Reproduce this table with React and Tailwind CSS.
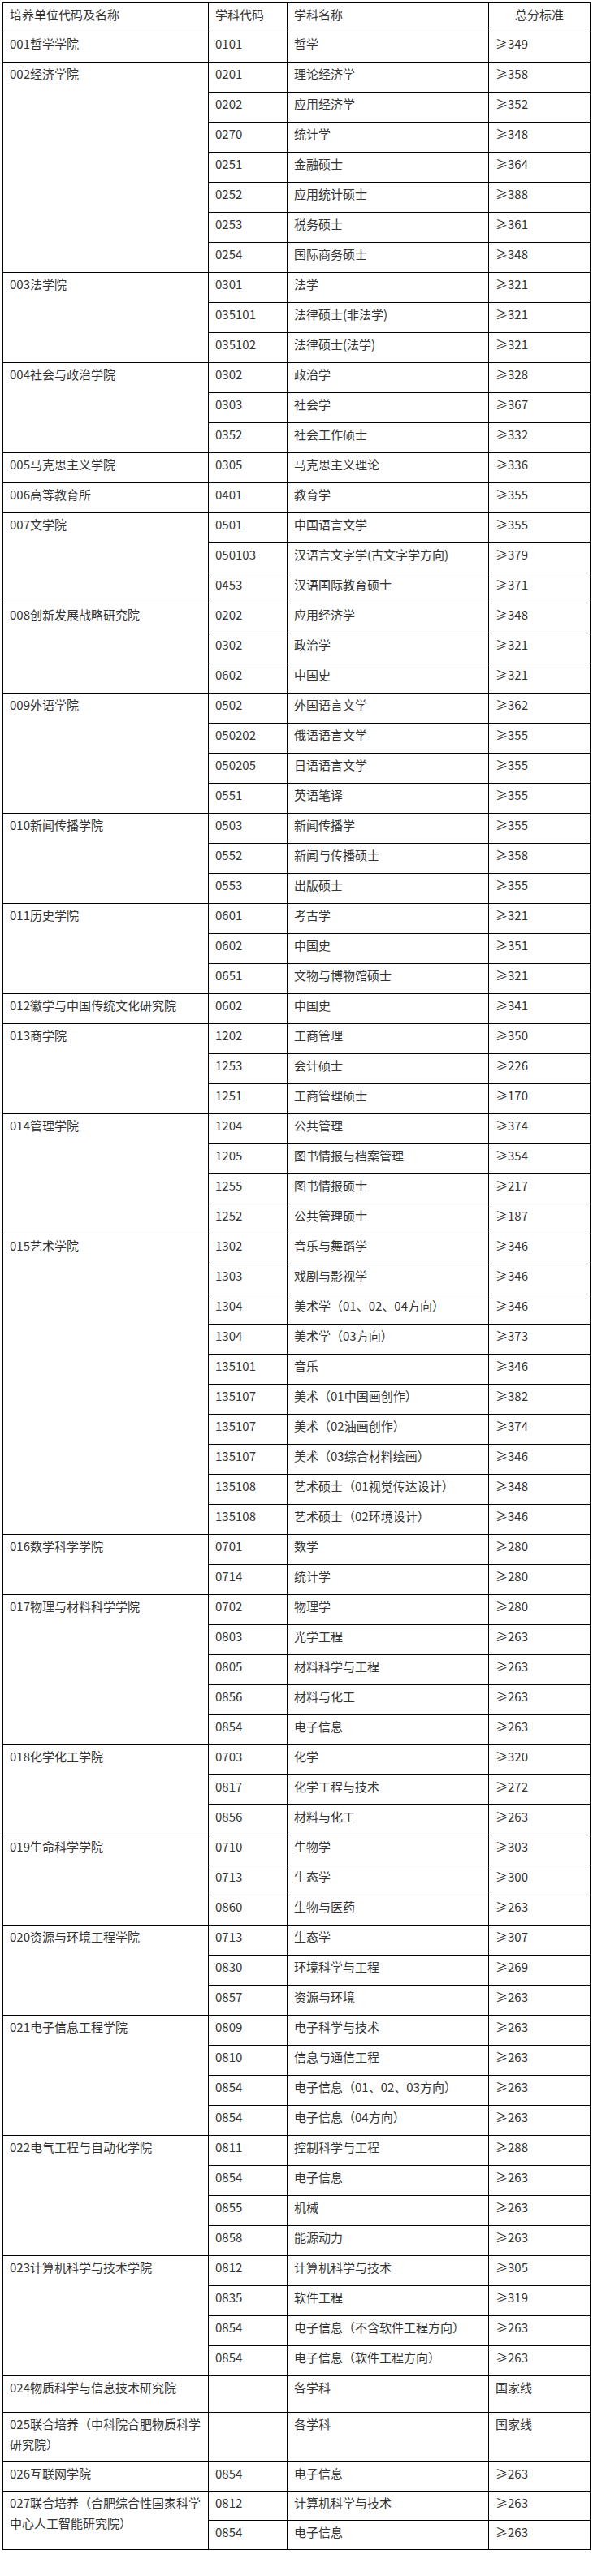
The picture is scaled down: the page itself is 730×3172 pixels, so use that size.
import React from "react";

const groups = [
  ["001哲学学院", [["0101", "哲学", "≥349"]]],
  [
    "002经济学院",
    [
      ["0201", "理论经济学", "≥358"],
      ["0202", "应用经济学", "≥352"],
      ["0270", "统计学", "≥348"],
      ["0251", "金融硕士", "≥364"],
      ["0252", "应用统计硕士", "≥388"],
      ["0253", "税务硕士", "≥361"],
      ["0254", "国际商务硕士", "≥348"],
    ],
  ],
  [
    "003法学院",
    [
      ["0301", "法学", "≥321"],
      ["035101", "法律硕士(非法学)", "≥321"],
      ["035102", "法律硕士(法学)", "≥321"],
    ],
  ],
  [
    "004社会与政治学院",
    [
      ["0302", "政治学", "≥328"],
      ["0303", "社会学", "≥367"],
      ["0352", "社会工作硕士", "≥332"],
    ],
  ],
  ["005马克思主义学院", [["0305", "马克思主义理论", "≥336"]]],
  ["006高等教育所", [["0401", "教育学", "≥355"]]],
  [
    "007文学院",
    [
      ["0501", "中国语言文学", "≥355"],
      ["050103", "汉语言文字学(古文字学方向)", "≥379"],
      ["0453", "汉语国际教育硕士", "≥371"],
    ],
  ],
  [
    "008创新发展战略研究院",
    [
      ["0202", "应用经济学", "≥348"],
      ["0302", "政治学", "≥321"],
      ["0602", "中国史", "≥321"],
    ],
  ],
  [
    "009外语学院",
    [
      ["0502", "外国语言文学", "≥362"],
      ["050202", "俄语语言文学", "≥355"],
      ["050205", "日语语言文学", "≥355"],
      ["0551", "英语笔译", "≥355"],
    ],
  ],
  [
    "010新闻传播学院",
    [
      ["0503", "新闻传播学", "≥355"],
      ["0552", "新闻与传播硕士", "≥358"],
      ["0553", "出版硕士", "≥355"],
    ],
  ],
  [
    "011历史学院",
    [
      ["0601", "考古学", "≥321"],
      ["0602", "中国史", "≥351"],
      ["0651", "文物与博物馆硕士", "≥321"],
    ],
  ],
  ["012徽学与中国传统文化研究院", [["0602", "中国史", "≥341"]]],
  [
    "013商学院",
    [
      ["1202", "工商管理", "≥350"],
      ["1253", "会计硕士", "≥226"],
      ["1251", "工商管理硕士", "≥170"],
    ],
  ],
  [
    "014管理学院",
    [
      ["1204", "公共管理", "≥374"],
      ["1205", "图书情报与档案管理", "≥354"],
      ["1255", "图书情报硕士", "≥217"],
      ["1252", "公共管理硕士", "≥187"],
    ],
  ],
  [
    "015艺术学院",
    [
      ["1302", "音乐与舞蹈学", "≥346"],
      ["1303", "戏剧与影视学", "≥346"],
      ["1304", "美术学（01、02、04方向）", "≥346"],
      ["1304", "美术学（03方向）", "≥373"],
      ["135101", "音乐", "≥346"],
      ["135107", "美术（01中国画创作）", "≥382"],
      ["135107", "美术（02油画创作）", "≥374"],
      ["135107", "美术（03综合材料绘画）", "≥346"],
      ["135108", "艺术硕士（01视觉传达设计）", "≥348"],
      ["135108", "艺术硕士（02环境设计）", "≥346"],
    ],
  ],
  [
    "016数学科学学院",
    [
      ["0701", "数学", "≥280"],
      ["0714", "统计学", "≥280"],
    ],
  ],
  [
    "017物理与材料科学学院",
    [
      ["0702", "物理学", "≥280"],
      ["0803", "光学工程", "≥263"],
      ["0805", "材料科学与工程", "≥263"],
      ["0856", "材料与化工", "≥263"],
      ["0854", "电子信息", "≥263"],
    ],
  ],
  [
    "018化学化工学院",
    [
      ["0703", "化学", "≥320"],
      ["0817", "化学工程与技术", "≥272"],
      ["0856", "材料与化工", "≥263"],
    ],
  ],
  [
    "019生命科学学院",
    [
      ["0710", "生物学", "≥303"],
      ["0713", "生态学", "≥300"],
      ["0860", "生物与医药", "≥263"],
    ],
  ],
  [
    "020资源与环境工程学院",
    [
      ["0713", "生态学", "≥307"],
      ["0830", "环境科学与工程", "≥269"],
      ["0857", "资源与环境", "≥263"],
    ],
  ],
  [
    "021电子信息工程学院",
    [
      ["0809", "电子科学与技术", "≥263"],
      ["0810", "信息与通信工程", "≥263"],
      ["0854", "电子信息（01、02、03方向）", "≥263"],
      ["0854", "电子信息（04方向）", "≥263"],
    ],
  ],
  [
    "022电气工程与自动化学院",
    [
      ["0811", "控制科学与工程", "≥288"],
      ["0854", "电子信息", "≥263"],
      ["0855", "机械", "≥263"],
      ["0858", "能源动力", "≥263"],
    ],
  ],
  [
    "023计算机科学与技术学院",
    [
      ["0812", "计算机科学与技术", "≥305"],
      ["0835", "软件工程", "≥319"],
      ["0854", "电子信息（不含软件工程方向）", "≥263"],
      ["0854", "电子信息（软件工程方向）", "≥263"],
    ],
  ],
];

const td = "border border-black align-top px-2 pt-[1px] pb-0";

export default function App() {
  return (
    <div
      className="bg-white min-h-[3172px] pt-[3px] pl-[3px] text-[#333] text-[15px] leading-[25px]"
      style={{ fontFamily: '"Noto Sans CJK SC", "Noto Sans", sans-serif' }}
    >
      <table className="table-fixed border-collapse w-[723px]">
        <colgroup>
          <col className="w-[253px]" />
          <col className="w-[97px]" />
          <col className="w-[248px]" />
          <col className="w-[125px]" />
        </colgroup>
        <tbody>
          <tr className="h-[36px]">
            <td className={td}>培养单位代码及名称</td>
            <td className={td}>学科代码</td>
            <td className={td}>学科名称</td>
            <td className={td + " text-center"}>总分标准</td>
          </tr>
          {groups.map(([name, rows]) =>
            rows.map((r, i) => (
              <tr key={name + i} className="h-[37px]">
                {i === 0 && (
                  <td className={td} rowSpan={rows.length}>
                    {name}
                  </td>
                )}
                <td className={td}>{r[0]}</td>
                <td className={td}>{r[1]}</td>
                <td className={td}>{r[2]}</td>
              </tr>
            ))
          )}
          <tr className="h-[45px]">
            <td className={td}>024物质科学与信息技术研究院</td>
            <td className={td}></td>
            <td className={td}>各学科</td>
            <td className={td}>国家线</td>
          </tr>
          <tr className="h-[61px]">
            <td className={td}>
              025联合培养（中科院合肥物质科学
              <br />
              研究院）
            </td>
            <td className={td}></td>
            <td className={td}>各学科</td>
            <td className={td}>国家线</td>
          </tr>
          <tr className="h-[36px]">
            <td className={td}>026互联网学院</td>
            <td className={td}>0854</td>
            <td className={td}>电子信息</td>
            <td className={td}>≥263</td>
          </tr>
          <tr className="h-[36px]">
            <td className={td} rowSpan={2}>
              027联合培养（合肥综合性国家科学
              <br />
              中心人工智能研究院）
            </td>
            <td className={td}>0812</td>
            <td className={td}>计算机科学与技术</td>
            <td className={td}>≥263</td>
          </tr>
          <tr className="h-[36px]">
            <td className={td}>0854</td>
            <td className={td}>电子信息</td>
            <td className={td}>≥263</td>
          </tr>
        </tbody>
      </table>
    </div>
  );
}
